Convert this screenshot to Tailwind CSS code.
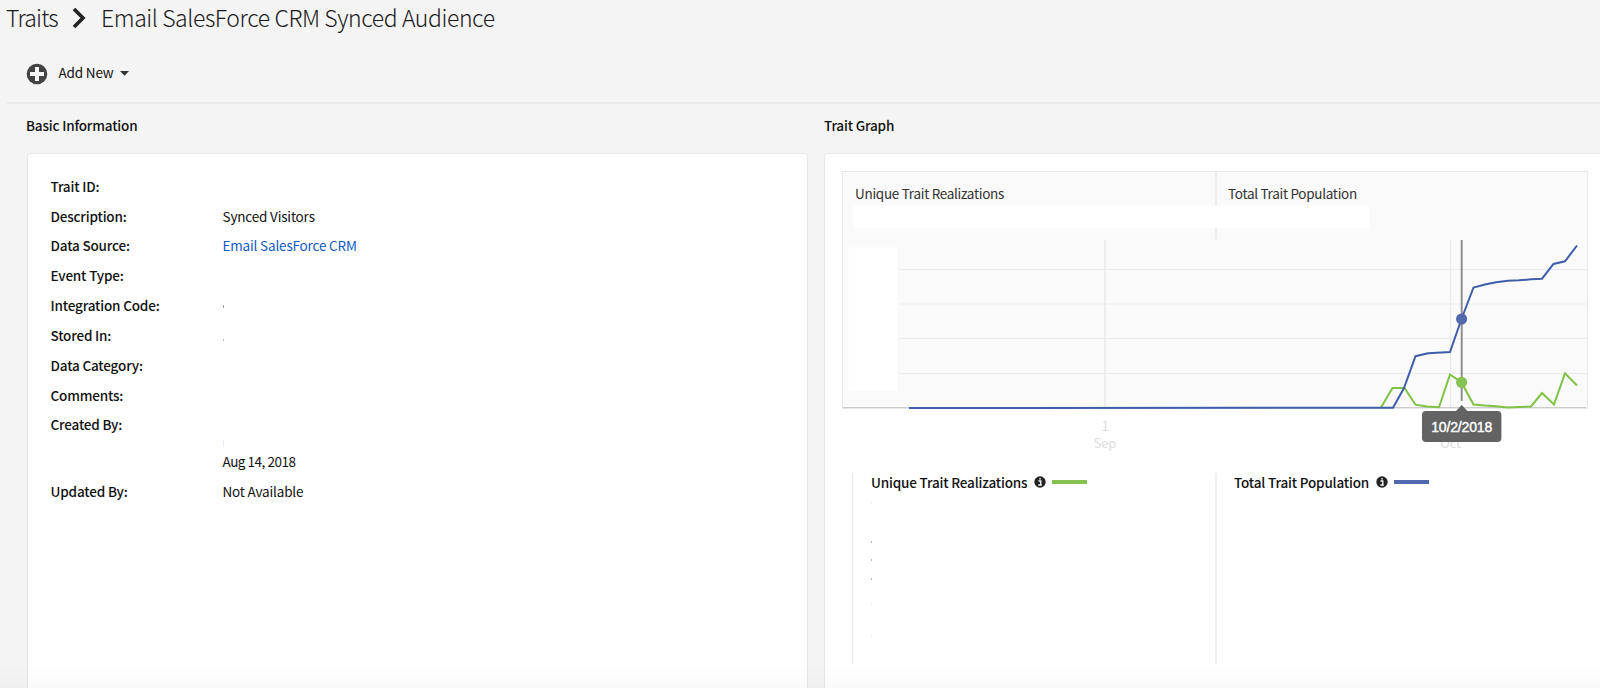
<!DOCTYPE html>
<html lang="en">
<head>
<meta charset="utf-8">
<title>Traits</title>
<script src="https://cdn.jsdelivr.net/npm/@tailwindcss/browser@4"></script>
</head>
<body class="relative flex h-[688px] w-[1600px] flex-col overflow-hidden bg-[#f4f4f4] font-['Noto_Sans_CJK_SC','Noto_Sans',sans-serif] text-[13.5px] tracking-[-0.17px] text-[#111]">
<header class="ml-[7px] h-[104px] border-b-2 border-[#e9e9e9]">
  <div class="flex h-[34px] items-center text-[23px] font-light leading-[34px] text-[#1a1a1a]">
    <span class="-ml-px w-[65px] tracking-[-0.8px]">Traits</span>
    <svg class="mt-0.5 mr-[14px] shrink-0" width="16" height="22" viewBox="0 0 16 22"><path d="M3 2l9 9L3 20" fill="none" stroke="#222" stroke-width="3.600"/></svg>
    <span class="tracking-[-0.42px]">Email SalesForce CRM Synced Audience</span>
  </div>
  <div class="ml-[19px] mt-[29px] flex h-[22px] items-center">
    <svg width="22" height="22" viewBox="0 0 22 22"><circle cx="11" cy="11" r="10.300" fill="#434343"/><path d="M11 4v14M4 11h14" stroke="#f7f7f7" stroke-width="4"/></svg>
    <span class="-mt-1 ml-[10.5px]">Add New</span>
    <svg class="-mt-px ml-[7px]" width="9" height="5" viewBox="0 0 9 5"><path d="M0 0h9L4.500 4.800z" fill="#333"/></svg>
  </div>
</header>
<main class="flex flex-1 gap-[16px] pl-[27px]">
  <section class="flex w-[781px] shrink-0 flex-col">
    <h2 class="-ml-px h-[49px] pt-[10px] font-medium leading-[22px]">Basic Information</h2>
    <dl class="flex-1 rounded-t border border-b-0 border-[#e6e6e6] bg-white pt-[17px] pl-[22.5px]">
      <div class="flex h-[29.85px] items-center"><dt class="w-[172px] font-medium">Trait ID:</dt></div>
      <div class="flex h-[29.85px] items-center"><dt class="w-[172px] font-medium">Description:</dt><dd>Synced Visitors</dd></div>
      <div class="flex h-[29.85px] items-center"><dt class="w-[172px] font-medium">Data Source:</dt><dd class="text-[#1359c4]">Email SalesForce CRM</dd></div>
      <div class="flex h-[29.85px] items-center"><dt class="w-[172px] font-medium">Event Type:</dt></div>
      <div class="flex h-[29.85px] items-center"><dt class="w-[172px] font-medium">Integration Code:</dt><dd class="mt-[2px] h-[3px] w-px bg-[#999]"></dd></div>
      <div class="flex h-[29.85px] items-center"><dt class="w-[172px] font-medium">Stored In:</dt><dd class="mt-[10px] h-0.5 w-px bg-[#bbb]"></dd></div>
      <div class="flex h-[29.85px] items-center"><dt class="w-[172px] font-medium">Data Category:</dt></div>
      <div class="flex h-[29.85px] items-center"><dt class="w-[172px] font-medium">Comments:</dt></div>
      <div class="flex h-[66px]"><dt class="w-[172px] font-medium leading-[29.85px]">Created By:</dt><dd class="self-end leading-[29px] tracking-[-0.47px]"><div class="h-[7px] w-px bg-[#e6eaf8]"></div>Aug 14, 2018</dd></div>
      <div class="flex h-[29.85px] items-center"><dt class="w-[172px] font-medium">Updated By:</dt><dd>Not Available</dd></div>
    </dl>
  </section>
  <section class="flex flex-1 flex-col">
    <h2 class="h-[49px] pt-[10px] font-medium leading-[22px]">Trait Graph</h2>
    <div class="flex-1 rounded-tl border-t border-l border-[#e6e6e6] bg-white pt-[17px] pl-[17px]">
      <div class="relative h-[302px] w-[746px]">
        <div class="flex h-[238px] border border-[#e8e8e8] bg-[#fafafa] tracking-[-0.29px]">
          <div class="w-[372px] pt-[10.5px] pl-[12px] text-[#333]">Unique Trait Realizations</div>
          <div class="h-[68px] border-l-2 border-[#ededed] pt-[10.5px] pl-[11px] text-[#333]">Total Trait Population</div>
        </div>
        <svg class="absolute top-0 left-0" width="746" height="302" viewBox="842 171 746 302">
          <path d="M853 205.500H1369V228H853zM848.500 247.500H897V391H848.500z" fill="#fff"/>
          <path d="M899 269.500H1587M899 304H1587M899 338.500H1587M899 373.500H1587M1450.500 240V407" stroke="#ebebeb" stroke-width="1.200" fill="none"/>
          <path d="M1105 240V407" stroke="#ececec" stroke-width="2"/>
          <path d="M843 407.500H1586" stroke="#ccc"/>
          <path d="M1461.700 240V401" stroke="#8f8f8f" stroke-width="2"/>
          <g fill="none" stroke-width="2">
            <path stroke="#7fc244" d="M1381 407.500L1392.500 388H1404.500L1415.500 404.700L1427 406.500L1439 407.200L1450 374.500L1461.500 382.500L1473.500 404.500L1485 405.500L1496 406.200L1508 407.500L1519 407L1531 406.500L1542 393L1554 404.500L1565 373.300L1577 385.500"/>
            <path stroke="#3f5da8" d="M909 408L1360 407.700H1393L1404 388L1415.500 356.200L1428 353.300L1450 352L1461.500 319L1473.500 287.500L1485 284.500L1496 282.300L1508 280.700L1519 280.300L1531 279.300L1542 278.700L1553.500 264L1565 261.300L1577 245.500"/>
          </g>
          <circle cx="1461.600" cy="319" r="5.600" fill="#5369ad"/><circle cx="1461.600" cy="382.300" r="5.600" fill="#86c250"/>
          <g fill="#dcdcdc" font-size="13" text-anchor="middle"><text x="1105" y="431">1</text><text x="1105" y="448">Sep</text><text x="1450.500" y="448">Oct</text></g>
          <path d="M1426 411h30l5.700-6l5.700 6h30a4 4 0 0 1 4 4v23a4 4 0 0 1-4 4h-71.400a4 4 0 0 1-4-4v-23a4 4 0 0 1 4-4z" fill="#636363"/>
          <text x="1461.700" y="432" text-anchor="middle" fill="#fff" stroke="#fff" stroke-width=".4" class="font-['Liberation_Sans',sans-serif] tracking-normal" font-size="14" textLength="61">10/2/2018</text>
        </svg>
      </div>
      <div class="ml-[10px] flex h-[191px]">
        <div class="flex w-[363px] items-start border-l border-[#e8e8e8] pl-[18px] font-medium">
          <div>
            <div class="flex h-[18px] items-center"><span>Unique Trait Realizations</span>
              <svg class="ml-[7px]" width="12" height="12" viewBox="0 0 12 12"><circle cx="6" cy="6" r="5.700" fill="#222"/><path d="M4.500 5h2.300v4M4.300 9h3.500M5.200 2.900h1.700" stroke="#fff" stroke-width="1.300" fill="none"/></svg>
              <span class="ml-[6px] h-[4px] w-[35px] bg-[#86c250]"></span></div>
            <svg width="2" height="160"><path d="M0 50v2M0 68v2M0 87v2" stroke="#bbb" stroke-width="2"/><path d="M0 11v2M0 112v2M0 144v2" stroke="#eee" stroke-width="2"/></svg>
          </div>
        </div>
        <div class="flex items-start border-l-2 border-[#f0f0f0] pl-[17px] font-medium">
          <div class="flex h-[18px] items-center"><span>Total Trait Population</span>
            <svg class="ml-[7px]" width="12" height="12" viewBox="0 0 12 12"><circle cx="6" cy="6" r="5.700" fill="#222"/><path d="M4.500 5h2.300v4M4.300 9h3.500M5.200 2.900h1.700" stroke="#fff" stroke-width="1.300" fill="none"/></svg>
            <span class="ml-[6px] h-[4px] w-[35px] bg-[#5369ad]"></span></div>
        </div>
      </div>
    </div>
  </section>
</main>
<div class="pointer-events-none absolute inset-x-0 bottom-0 h-6 bg-linear-to-b from-black/0 to-black/2"></div>
</body>
</html>
